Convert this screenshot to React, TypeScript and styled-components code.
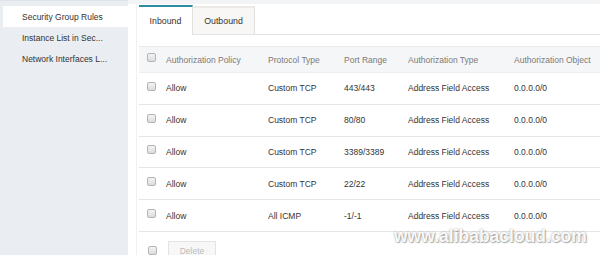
import React from "react";
import styled, { createGlobalStyle } from "styled-components";

const Global = createGlobalStyle`
  html, body { margin: 0; padding: 0; background: #fff; }
  body { font-family: "Liberation Sans", Arial, sans-serif; }
`;

const Page = styled.div`
  position: relative;
  display: flex;
  width: 600px;
  height: 255px;
  overflow: hidden;
  background: #fff;
  font-size: 8.5px;
  color: #333;
`;

const Sidebar = styled.nav`
  width: 128px;
  flex: none;
  background: #eaedf1;
  padding: 5px 0 0 3px;
  border-top: 1px solid #dfe2e6;
  box-sizing: border-box;
`;

const NavItem = styled.div<{ $active?: boolean }>`
  height: 21px;
  display: flex;
  align-items: center;
  padding-left: 19px;
  background: ${(p) => (p.$active ? "#fff" : "transparent")};
  color: #333;
  white-space: nowrap;
`;

const Main = styled.main`
  flex: 1;
  display: flex;
  flex-direction: column;
  padding-left: 8px;
  border-top: 4px solid #f3f4f5;
  box-sizing: border-box;
`;

const Content = styled.div`
  flex: 1;
  display: flex;
  flex-direction: column;
  border-left: 1px solid #eef0f2;
  padding-left: 2px;
`;

const TabBar = styled.div`
  display: flex;
  height: 29px;
  border-bottom: 1px solid #e3e3e3;
  margin-top: 1px;
`;

const Tab = styled.div<{ $active?: boolean }>`
  box-sizing: border-box;
  width: ${(p) => (p.$active ? "54px" : "62px")};
  height: ${(p) => (p.$active ? "30px" : "28px")};
  margin-top: ${(p) => (p.$active ? "0" : "1px")};
  display: flex;
  align-items: center;
  justify-content: center;
  background: ${(p) => (p.$active ? "#fff" : "#f9f7f5")};
  border-top: 2px solid ${(p) => (p.$active ? "#2a8ea0" : "#ece9e6")};
  border-right: 1px solid #e3e0dd;
  color: #333;
  font-size: 8.8px;
`;

const Table = styled.div`
  margin-top: 11px;
  display: flex;
  flex-direction: column;
`;

const cols = "27px 102px 76px 64px 106px 1fr";

const HeaderRow = styled.div`
  display: grid;
  grid-template-columns: ${cols};
  height: 25px;
  align-items: center;
  background: #f5f6f7;
  border-top: 1px solid #e8e9eb;
  border-bottom: 1px solid #eceef0;
  color: #7a7a7a;
  white-space: nowrap;
`;

const Row = styled.div`
  display: grid;
  grid-template-columns: ${cols};
  height: 30.8px;
  align-items: center;
  border-bottom: 1px solid #e6e6e6;
  white-space: nowrap;
`;

const CheckCell = styled.div`
  display: flex;
  justify-content: center;
  padding-right: 2px;
  margin-top: -4px;
`;

const Box = styled.span`
  display: inline-block;
  width: 7px;
  height: 7px;
  border: 1px solid #b4b4b4;
  border-radius: 2px;
  background: linear-gradient(#f4f4f4, #dcdcdc);
`;

const Footer = styled.div`
  display: flex;
  align-items: flex-start;
  padding-top: 9px;
`;

const FootCheck = styled.div`
  width: 27px;
  display: flex;
  justify-content: center;
  padding-right: 2px;
  padding-top: 5px;
`;

const DeleteButton = styled.button`
  font: inherit;
  font-size: 8.5px;
  width: 48px;
  height: 21px;
  background: #f7f7f7;
  border: 1px solid #e3e3e3;
  color: #bbb;
  padding: 0;
`;

const Watermark = styled.div`
  position: absolute;
  left: 394px;
  top: 226px;
  font-family: "Liberation Sans", Arial, sans-serif;
  font-size: 17.5px;
  font-weight: bold;
  color: rgba(255, 255, 255, 0.95);
  text-shadow: 0 0 2px rgba(90, 90, 90, 0.55), 1px 1px 1px rgba(120, 120, 120, 0.5);
  white-space: nowrap;
`;

const rows = [
  { port: "443/443", proto: "Custom TCP" },
  { port: "80/80", proto: "Custom TCP" },
  { port: "3389/3389", proto: "Custom TCP" },
  { port: "22/22", proto: "Custom TCP" },
  { port: "-1/-1", proto: "All ICMP" },
];

export default function App() {
  return (
    <>
      <Global />
      <Page>
        <Sidebar>
          <NavItem $active>Security Group Rules</NavItem>
          <NavItem>Instance List in Sec...</NavItem>
          <NavItem>Network Interfaces L...</NavItem>
        </Sidebar>
        <Main>
          <Content>
            <TabBar>
              <Tab $active>Inbound</Tab>
              <Tab>Outbound</Tab>
            </TabBar>
            <Table>
              <HeaderRow>
                <CheckCell>
                  <Box />
                </CheckCell>
                <div>Authorization Policy</div>
                <div>Protocol Type</div>
                <div>Port Range</div>
                <div>Authorization Type</div>
                <div>Authorization Object</div>
              </HeaderRow>
              {rows.map((r, i) => (
                <Row key={i}>
                  <CheckCell>
                    <Box />
                  </CheckCell>
                  <div>Allow</div>
                  <div>{r.proto}</div>
                  <div>{r.port}</div>
                  <div>Address Field Access</div>
                  <div>0.0.0.0/0</div>
                </Row>
              ))}
            </Table>
            <Footer>
              <FootCheck>
                <Box />
              </FootCheck>
              <DeleteButton>Delete</DeleteButton>
            </Footer>
          </Content>
        </Main>
        <Watermark>www.alibabacloud.com</Watermark>
      </Page>
    </>
  );
}
